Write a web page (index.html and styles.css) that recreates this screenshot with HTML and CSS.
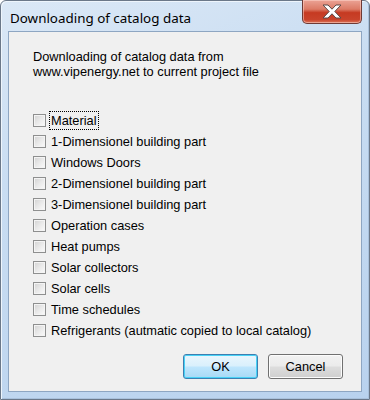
FILE: index.html
```html
<!DOCTYPE html>
<html lang="en">
<head>
    <meta charset="UTF-8">
    <title>Downloading of catalog data</title>
    <link rel="stylesheet" href="styles.css">
</head>
<body>

<div class="window">
    <div class="titlebar">
        <span class="title">Downloading of catalog data</span>
        <div class="close-btn">
            <svg width="22" height="15" viewBox="0 0 22 15">
                <path d="M2 1 H7 L11 5.2 L15 1 H20 L13.8 7.5 L20 14 H15 L11 9.8 L7 14 H2 L8.2 7.5 Z"
                      fill="#ffffff" stroke="#5b4a48" stroke-width="1" stroke-linejoin="round"/>
            </svg>
        </div>
    </div>
    <div class="client">
        <p class="intro">Downloading of catalog data from<br>www.vipenergy.net to current project file</p>
        <div class="checklist">
            <label class="check-row"><input type="checkbox" id="material"><span class="focus">Material</span></label>
            <label class="check-row"><input type="checkbox"><span>1-Dimensionel building part</span></label>
            <label class="check-row"><input type="checkbox"><span>Windows Doors</span></label>
            <label class="check-row"><input type="checkbox"><span>2-Dimensionel building part</span></label>
            <label class="check-row"><input type="checkbox"><span>3-Dimensionel building part</span></label>
            <label class="check-row"><input type="checkbox"><span>Operation cases</span></label>
            <label class="check-row"><input type="checkbox"><span>Heat pumps</span></label>
            <label class="check-row"><input type="checkbox"><span>Solar collectors</span></label>
            <label class="check-row"><input type="checkbox"><span>Solar cells</span></label>
            <label class="check-row"><input type="checkbox"><span>Time schedules</span></label>
            <label class="check-row"><input type="checkbox"><span>Refrigerants (autmatic copied to local catalog)</span></label>
        </div>
        <div class="buttons">
            <button type="button" class="btn btn-default">OK</button>
            <button type="button" class="btn">Cancel</button>
        </div>
    </div>
</div>

</body>
</html>
```

FILE: styles.css
```css
body {
    margin: 0;
    font-family: "Liberation Sans", Arial, sans-serif;
    background: #ffffff;
}
.window {
    width: 370px;
    height: 400px;
    box-sizing: border-box;
    border: 1px solid #6b7889;
    border-radius: 6px 6px 0 0;
    padding: 0 7px 7px 7px;
    background: linear-gradient(160deg, #dbe8f6 0%, #c9ddf2 35%, #b9d2ee 100%);
    box-shadow: inset 1px 1px 0 #eef5fc, inset -1px -1px 0 #a9c1dc;
    display: flex;
    flex-direction: column;
}
.titlebar {
    height: 30px;
    display: flex;
    justify-content: space-between;
    align-items: flex-start;
}
.title {
    font-family: "Noto Sans", "Open Sans", sans-serif;
    font-size: 13.4px;
    color: #000000;
    padding: 8px 0 0 2px;
}
.close-btn {
    width: 60px;
    height: 24px;
    margin-top: -1px;
    box-sizing: border-box;
    border: 1px solid #6e3a35;
    border-top: none;
    border-radius: 0 0 5px 5px;
    background: linear-gradient(#eba395 0%, #dc7b66 40%, #c63a22 55%, #c9432b 85%, #db7459 100%);
    box-shadow: inset 0 0 0 1px rgba(255, 220, 210, 0.5);
    display: flex;
    align-items: center;
    justify-content: center;
}
.client {
    flex: 1;
    background: #f0f0f0;
    border: 1px solid #8ea6c2;
    padding: 17px 18px 12px 24px;
    display: flex;
    flex-direction: column;
    font-size: 12.8px;
    color: #000000;
}
.intro {
    margin: 0;
    line-height: 15px;
}
.checklist {
    margin-top: 31px;
    display: flex;
    flex-direction: column;
}
.check-row {
    height: 21px;
    display: flex;
    align-items: center;
}
.check-row input[type="checkbox"] {
    appearance: none;
    -webkit-appearance: none;
    width: 13px;
    height: 13px;
    margin: 0 3px 0 0;
    box-sizing: border-box;
    border: 1px solid #8e8f8f;
    background: linear-gradient(135deg, #d2d2d2 0%, #e9e9e9 50%, #fbfbfb 100%);
    box-shadow: inset 0 0 0 1px #f4f4f4;
}
.check-row span {
    padding: 1px 1px;
    border: 1px solid transparent;
}
.check-row span.focus {
    border: 1px dotted #000000;
}
.buttons {
    margin-top: auto;
    display: flex;
    justify-content: flex-end;
    gap: 10px;
}
.btn {
    width: 75px;
    height: 25px;
    font-family: "Liberation Sans", Arial, sans-serif;
    font-size: 12.8px;
    color: #000000;
    border: 1px solid #707070;
    border-radius: 3px;
    background: linear-gradient(#f2f2f2 0%, #ebebeb 48%, #dddddd 52%, #cfcfcf 100%);
    box-shadow: inset 0 0 0 1px #fcfcfc;
    padding: 0;
}
.btn-default {
    border-color: #3c7fb1;
    background: linear-gradient(#eaf6fd 0%, #d9f0fc 48%, #bee6fd 52%, #a7d9f5 100%);
    box-shadow: inset 0 0 0 1px #48d2f6;
}
```
